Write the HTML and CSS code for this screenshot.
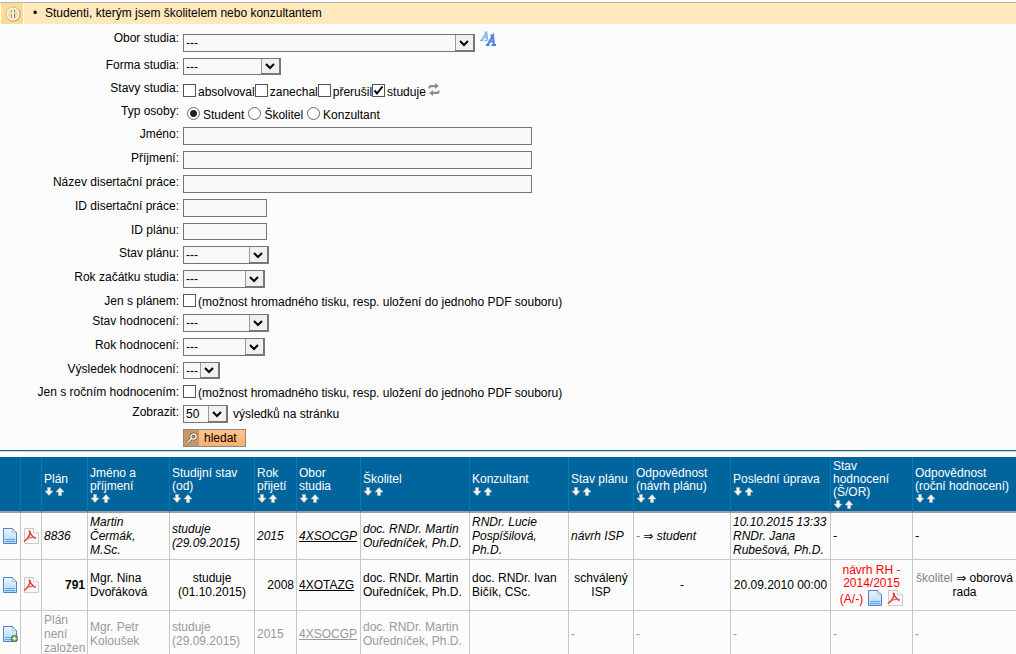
FILE: index.html
```html
<!DOCTYPE html>
<html lang="cs">
<head>
    <meta charset="UTF-8">
    <meta name="viewport" content="width=device-width, initial-scale=1.0">
    <title>Studenti</title>
    <link rel="stylesheet" href="styles.css">
</head>
<body>
    <svg class="defs" aria-hidden="true">
        <defs>
            <linearGradient id="blue" x1="0" y1="0" x2="0" y2="1">
                <stop offset="0" stop-color="#edf5ff"/>
                <stop offset="1" stop-color="#b0d5fb"/>
            </linearGradient>
        </defs>
        <symbol id="doc" viewBox="0 0 16 16">
            <path d="M1.500 .5h9l4 4v11h-13z" fill="url(#blue)" stroke="#4f83c4"/>
            <path d="M10.500 1v3.500h3.500z" fill="#fff" stroke="#9dc0e8"/>
            <path d="M3 11.500h10M3 13.500h10" stroke="#5aa5f2"/>
        </symbol>
        <symbol id="add" viewBox="0 0 16 16">
            <use href="#doc"/>
            <circle cx="12.500" cy="12.500" r="3.300" fill="#5c9a38" stroke="#3f7424" stroke-width=".6"/>
            <path d="M12.500 10.500v4M10.500 12.500h4" stroke="#fff" stroke-width="1.300"/>
        </symbol>
        <symbol id="pdf" viewBox="0 0 16 16">
            <path d="M1.500 .5h9l5 4.500v10.500h-14z" fill="#fafafa" stroke="#cacaca"/>
            <path d="M10.500 .5v4.500h5" fill="#fff" stroke="#cfcfcf"/>
            <path d="M6.200 2.500C7 5 7.500 7.500 12.500 10.500" fill="none" stroke="#dc403a" stroke-width="1.500"/>
            <path d="M6.800 3C7.300 7 4.500 11 1 13.500" fill="none" stroke="#dc403a" stroke-width="1.500"/>
            <path d="M4 10.500C7 9.300 10 9 13 9.700" fill="none" stroke="#e0605a" stroke-width="1.200"/>
        </symbol>
        <symbol id="down" viewBox="0 0 10 10">
            <path d="M3.500 1h3v3.500h2.500L5 9 1 4.500h2.500z" fill="#f4f4f4" stroke="#c9c4bd" stroke-width=".5"/>
        </symbol>
        <symbol id="up" viewBox="0 0 10 10">
            <path d="M3.500 9h3V5.500h2.500L5 1 1 5.500h2.500z" fill="#f4f4f4" stroke="#c9c4bd" stroke-width=".5"/>
        </symbol>
    </svg>

    <header class="notice">
        <div class="notice-icon">
            <svg width="16" height="16" viewBox="0 0 16 16">
                <circle cx="8.500" cy="8.500" r="6.500" fill="#ffdb94" stroke="#b39a6c" stroke-width="1.200"/>
                <circle cx="8" cy="8" r="6" fill="#f8dda5" stroke="#fff" stroke-width="1.400"/>
                <circle cx="8" cy="8" r="7" fill="none" stroke="#b8a27a" stroke-width=".6"/>
                <path d="M9.500 4v2M9.500 7.500v4.500" fill="none" stroke="#8e7a55"/>
                <path d="M8 4v2M8 7v5" fill="none" stroke="#fff" stroke-width="2"/>
                <path d="M6.500 4v2M6.500 8v4" fill="none" stroke="#a8946c"/>
            </svg>
        </div>
        <ul class="notice-list">
            <li>Studenti, kterým jsem školitelem nebo konzultantem</li>
        </ul>
    </header>

    <form class="search">
        <div class="row first">
            <label class="name" for="obor">Obor studia:</label>
            <div class="field">
                <select id="obor" class="w-obor"><option>---</option></select>
                <svg class="icon-aa" width="16" height="16" viewBox="0 0 16 16">
                    <path d="M0 9.500h3.500M4.500 9.500h3M1.500 9.500L6.500 1.500l1 8M3.500 6.500h4M4.500 1.500h2.500" fill="none" stroke="#86b8f0" stroke-width="1.700"/>
                    <path d="M6 14h3.500M11.500 14h4.500M7.500 14l5.500-9.500L14 14M9.500 10.500h4.500M10.500 4.500h3.500" fill="none" stroke="#4a86e2" stroke-width="2"/>
                </svg>
            </div>
        </div>
        <div class="row">
            <label class="name" for="forma">Forma studia:</label>
            <div class="field"><select id="forma" class="short w-forma"><option>---</option></select></div>
        </div>
        <div class="row choices">
            <span class="name" id="stavy">Stavy studia:</span>
            <div class="field" role="group" aria-labelledby="stavy">
                <label class="check"><input type="checkbox">absolvoval</label>
                <label class="check"><input type="checkbox">zanechal</label>
                <label class="check"><input type="checkbox">přerušil</label>
                <label class="check"><input type="checkbox" checked>studuje</label>
                <svg class="icon-swap" width="12" height="13" viewBox="0 0 12 13">
                    <path d="M.5 5.500V3.500L2 2h5V0l4 3-4 3V4.300H3L1.500 5.500zM11.500 7.500v2L10 11H5v2l-4-3 4-3v1.700h4L10.500 7.500z" fill="#8d8d8d"/>
                </svg>
            </div>
        </div>
        <div class="row choices">
            <span class="name" id="typ">Typ osoby:</span>
            <div class="field radios" role="group" aria-labelledby="typ">
                <label class="radio"><input type="radio" name="typ" checked>Student</label>
                <label class="radio"><input type="radio" name="typ">Školitel</label>
                <label class="radio"><input type="radio" name="typ">Konzultant</label>
            </div>
        </div>
        <div class="row">
            <label class="name" for="jmeno">Jméno:</label>
            <div class="field"><input type="text" id="jmeno" class="long"></div>
        </div>
        <div class="row">
            <label class="name" for="prijmeni">Příjmení:</label>
            <div class="field"><input type="text" id="prijmeni" class="long"></div>
        </div>
        <div class="row">
            <label class="name" for="nazev">Název disertační práce:</label>
            <div class="field"><input type="text" id="nazev" class="long"></div>
        </div>
        <div class="row">
            <label class="name" for="idprace">ID disertační práce:</label>
            <div class="field"><input type="text" id="idprace"></div>
        </div>
        <div class="row">
            <label class="name" for="idplanu">ID plánu:</label>
            <div class="field"><input type="text" id="idplanu" class="short"></div>
        </div>
        <div class="row">
            <label class="name" for="stavplanu">Stav plánu:</label>
            <div class="field"><select id="stavplanu" class="w-stav"><option>---</option></select></div>
        </div>
        <div class="row">
            <label class="name" for="rokzacatku">Rok začátku studia:</label>
            <div class="field"><select id="rokzacatku" class="w-rok"><option>---</option></select></div>
        </div>
        <div class="row single">
            <label class="name" for="splanem">Jen s plánem:</label>
            <label class="check"><input type="checkbox" id="splanem">(možnost hromadného tisku, resp. uložení do jednoho PDF souboru)</label>
        </div>
        <div class="row">
            <label class="name" for="stavhod">Stav hodnocení:</label>
            <div class="field"><select id="stavhod" class="w-stav"><option>---</option></select></div>
        </div>
        <div class="row">
            <label class="name" for="rokhod">Rok hodnocení:</label>
            <div class="field"><select id="rokhod" class="w-rok"><option>---</option></select></div>
        </div>
        <div class="row">
            <label class="name" for="vysledek">Výsledek hodnocení:</label>
            <div class="field"><select id="vysledek" class="short w-vysledek"><option>---</option></select></div>
        </div>
        <div class="row single">
            <label class="name" for="srocnim">Jen s ročním hodnocením:</label>
            <label class="check"><input type="checkbox" id="srocnim">(možnost hromadného tisku, resp. uložení do jednoho PDF souboru)</label>
        </div>
        <div class="row">
            <label class="name" for="zobrazit">Zobrazit:</label>
            <div class="field"><select id="zobrazit" class="w-pocet"><option>50</option></select><span class="after">výsledků na stránku</span></div>
        </div>
        <div class="row">
            <span class="name"></span>
            <button type="submit" class="submit">
                <span class="submit-icon">
                    <svg width="12" height="12" viewBox="0 0 12 12">
                        <path d="M5.500 6.500L1.500 10.500" stroke="#7d5738" stroke-width="3"/>
                        <circle cx="7.500" cy="4.500" r="2.600" fill="#b98a62" stroke="#7d5738" stroke-width="2.600"/>
                        <path d="M5.500 6.500L1.500 10.500" stroke="#fff" stroke-width="1.300"/>
                        <circle cx="7.500" cy="4.500" r="2.600" fill="none" stroke="#fff" stroke-width="1.300"/>
                    </svg>
                </span>
                <span class="submit-text">hledat</span>
            </button>
        </div>
    </form>

    <table class="list">
        <colgroup>
            <col class="c-icon"><col class="c-icon"><col class="c-plan"><col class="c-jmeno"><col class="c-studium"><col class="c-rok"><col class="c-obor"><col class="c-skolitel"><col class="c-konzultant"><col class="c-stav"><col class="c-odpovednost"><col class="c-uprava"><col class="c-hodnoceni"><col>
        </colgroup>
        <thead>
            <tr>
                <th></th>
                <th></th>
                <th>Plán<div class="sort"><svg><use href="#down"/></svg><svg><use href="#up"/></svg></div></th>
                <th>Jméno a příjmení<div class="sort"><svg><use href="#down"/></svg><svg><use href="#up"/></svg></div></th>
                <th>Studijní stav (od)<div class="sort"><svg><use href="#down"/></svg><svg><use href="#up"/></svg></div></th>
                <th>Rok přijetí<div class="sort"><svg><use href="#down"/></svg><svg><use href="#up"/></svg></div></th>
                <th>Obor studia<div class="sort"><svg><use href="#down"/></svg><svg><use href="#up"/></svg></div></th>
                <th>Školitel<div class="sort"><svg><use href="#down"/></svg><svg><use href="#up"/></svg></div></th>
                <th>Konzultant<div class="sort"><svg><use href="#down"/></svg><svg><use href="#up"/></svg></div></th>
                <th>Stav plánu<div class="sort"><svg><use href="#down"/></svg><svg><use href="#up"/></svg></div></th>
                <th>Odpovědnost (návrh plánu)<div class="sort"><svg><use href="#down"/></svg><svg><use href="#up"/></svg></div></th>
                <th>Poslední úprava<div class="sort"><svg><use href="#down"/></svg><svg><use href="#up"/></svg></div></th>
                <th>Stav hodnocení (Š/OR)<div class="sort"><svg><use href="#down"/></svg><svg><use href="#up"/></svg></div></th>
                <th>Odpovědnost (roční hodnocení)<div class="sort"><svg><use href="#down"/></svg><svg><use href="#up"/></svg></div></th>
            </tr>
        </thead>
        <tbody>
            <tr class="draft">
                <td class="icon"><svg><use href="#doc"/></svg></td>
                <td class="icon"><svg><use href="#pdf"/></svg></td>
                <td>8836</td>
                <td>Martin Čermák, M.Sc.</td>
                <td>studuje (29.09.2015)</td>
                <td>2015</td>
                <td><a href="#">4XSOCGP</a></td>
                <td>doc. RNDr. Martin Ouředníček, Ph.D.</td>
                <td>RNDr. Lucie Pospíšilová, Ph.D.</td>
                <td>návrh ISP</td>
                <td><span class="muted">-</span> <span class="arrow">⇒</span> student</td>
                <td>10.10.2015 13:33 RNDr. Jana Rubešová, Ph.D.</td>
                <td>-</td>
                <td>-</td>
            </tr>
            <tr class="approved">
                <td class="icon"><svg><use href="#doc"/></svg></td>
                <td class="icon"><svg><use href="#pdf"/></svg></td>
                <td class="right"><b>791</b></td>
                <td>Mgr. Nina Dvořáková</td>
                <td class="center">studuje (01.10.2015)</td>
                <td class="right">2008</td>
                <td><a href="#">4XOTAZG</a></td>
                <td>doc. RNDr. Martin Ouředníček, Ph.D.</td>
                <td>doc. RNDr. Ivan Bičík, CSc.</td>
                <td class="center">schválený ISP</td>
                <td class="center">-</td>
                <td class="center">20.09.2010 00:00</td>
                <td class="center alert">návrh RH - 2014/2015 <span class="files">(A/-) <svg><use href="#doc"/></svg><svg><use href="#pdf"/></svg></span></td>
                <td class="center"><span class="muted">školitel</span> <span class="arrow">⇒</span> oborová rada</td>
            </tr>
            <tr class="none">
                <td class="icon"><svg><use href="#add"/></svg></td>
                <td></td>
                <td>Plán není založen</td>
                <td>Mgr. Petr Koloušek</td>
                <td>studuje (29.09.2015)</td>
                <td>2015</td>
                <td><a href="#">4XSOCGP</a></td>
                <td>doc. RNDr. Martin Ouředníček, Ph.D.</td>
                <td></td>
                <td>-</td>
                <td>-</td>
                <td>-</td>
                <td>-</td>
                <td>-</td>
            </tr>
        </tbody>
    </table>
</body>
</html>
```
FILE: styles.css
```css
*{
    box-sizing: border-box;
}

body{
    margin: 0;
    background: #fcfcfc;
    color: #000;
    font: 12px/14px "Liberation Sans", Arial, sans-serif;
}

input, select, button{
    margin: 0;
    font: inherit;
    color: inherit;
}

svg{
    display: block;
}

.defs{
    position: absolute;
    width: 0;
    height: 0;
}

/* notice bar */
.notice{
    display: flex;
    margin-top: 2px;
    padding-left: 1px;
    border-top: 1px solid #b5b5b5;
}

.notice-icon{
    display: flex;
    align-items: center;
    justify-content: center;
    width: 22px;
    height: 21px;
    padding-left: 2px;
    padding-top: 1px;
    margin-right: 1px;
    background: #ffdb94;
}

.notice-list{
    flex: 1;
    margin: 0;
    padding: 3px 0 4px 9px;
    list-style: none;
    background: #ffe8bc;
}

.notice-list li::before{
    content: "•";
    display: inline-block;
    width: 12px;
}

/* search form */
.search{
    padding-top: 7px;
    padding-bottom: 3px;
    border-bottom: 1px solid #0a689f;
}

.row{
    display: flex;
    align-items: flex-start;
    margin-bottom: 6px;
}

.row:last-child{
    margin-bottom: 0;
}

.name{
    width: 179px;
    margin-right: 4px;
    text-align: right;
}

.field{
    display: flex;
    align-items: flex-start;
}

.first .field{
    padding-top: 3px;
}

.choices .field{
    height: 17px;
    padding-top: 3px;
}

.single{
    height: 20px;
    margin-bottom: 0;
}

input[type="text"]{
    width: 84px;
    height: 18px;
    padding: 0 2px;
    border: 1px solid #767676;
    background: #f8f8f8;
}

input[type="text"].long{
    width: 349px;
}

select{
    height: 18px;
    padding: 0 2px;
    border: 1px solid #767676;
    border-radius: 0;
    background: #f8f8f8 url("data:image/svg+xml,%3Csvg xmlns='http://www.w3.org/2000/svg' width='19' height='16'%3E%3Cpath fill='%23f0f0f0' stroke='%23999' d='M.5-.5h18v17H.5z'/%3E%3Cpath fill='none' stroke='%23777' d='M18.500 0v15.500H0'/%3E%3Cpath fill='none' stroke='%23000' stroke-width='2' d='M5 6l4 4 4-4'/%3E%3C/svg%3E") right bottom no-repeat;
    -webkit-appearance: none;
    appearance: none;
}

input[type="text"].short,
select.short{
    height: 17px;
}

.w-obor{ width: 292px; }
.w-forma{ width: 98px; }
.w-stav{ width: 86px; }
.w-rok{ width: 82px; }
.w-vysledek{ width: 37px; }
.w-pocet{ width: 45px; }

.icon-aa{
    margin: -3px 0 0 5px;
}

.check,
.radio{
    display: flex;
    align-items: flex-start;
    line-height: 16px;
}

.check input{
    width: 13px;
    height: 13px;
    margin-right: 2px;
    border: 1px solid #555;
    background: #fff;
    -webkit-appearance: none;
    appearance: none;
}

.check input:checked{
    background: #fff url("data:image/svg+xml,%3Csvg xmlns='http://www.w3.org/2000/svg' width='11' height='11'%3E%3Cpath fill='none' stroke='%23000' stroke-width='2' d='M1.500 5.500l2.500 3 5.500-7'/%3E%3C/svg%3E") center no-repeat;
}

.icon-swap{
    margin: -1px 0 0 2px;
}

.radios{
    gap: 4px;
    padding-left: 4px;
}

.radio input{
    width: 13px;
    height: 13px;
    margin-right: 3px;
    border: 1px solid #666;
    border-radius: 50%;
    background: #fff;
    -webkit-appearance: none;
    appearance: none;
}

.radio input:checked{
    background: radial-gradient(circle, #222 3px, #fff 4px);
}

.after{
    padding-left: 5px;
    line-height: 18px;
}

.submit{
    display: flex;
    height: 18px;
    padding: 0;
    border: 1px solid #8d8681;
    background: linear-gradient(#ffc38f, #ffb06b);
    line-height: 16px;
}

.submit-icon{
    display: flex;
    align-items: center;
    justify-content: center;
    width: 15px;
    height: 16px;
    background: #c8966b;
}

.submit-text{
    padding: 0 8px 0 5px;
}

/* list of students */
.list{
    width: 100%;
    border-top: 1px solid #d5d5d5;
    border-spacing: 0;
    table-layout: fixed;
}

.list thead::before{
    content: "";
    display: block;
    height: 5px;
    background: #fff;
}

.c-icon{ width: 21px; }
.c-plan{ width: 46px; }
.c-jmeno{ width: 82px; }
.c-studium{ width: 85px; }
.c-rok{ width: 42px; }
.c-obor{ width: 64px; }
.c-skolitel{ width: 109px; }
.c-konzultant{ width: 99px; }
.c-stav{ width: 65px; }
.c-odpovednost{ width: 97px; }
.c-uprava{ width: 100px; }
.c-hodnoceni{ width: 82px; }

.list th{
    height: 56px;
    padding: 2px 0 0 2px;
    border-right: 1px solid #0c77b0;
    border-bottom: 2px solid #9f9f9f;
    background: #00659c;
    color: #fff;
    font-weight: normal;
    line-height: 13px;
    text-align: left;
}

.sort{
    display: flex;
    gap: 1px;
}

.sort svg{
    width: 10px;
    height: 11px;
}

.list td{
    padding: 2px 0 2px 2px;
    border-right: 1px solid #c8c8c8;
    border-bottom: 1px solid #c8c8c8;
}

.list th:last-child,
.list td:last-child{
    border-right: 0;
}

.list td.icon svg{
    width: 16px;
    height: 16px;
}

.list td.right{
    padding-right: 2px;
    text-align: right;
}

.list td.center{
    padding-left: 0;
    text-align: center;
}

.list td.alert{
    color: #f00;
    line-height: 13px;
}

.files{
    display: flex;
    align-items: flex-end;
    justify-content: center;
    gap: 4px;
}

.files svg{
    width: 16px;
    height: 16px;
}

.list a{
    color: inherit;
}

.arrow{
    font: normal 12px/12px "DejaVu Sans", sans-serif;
}

.draft{
    font-style: italic;
}

.approved{
    height: 51px;
}

.none{
    color: #999;
}

.muted{
    color: #808080;
}
```
